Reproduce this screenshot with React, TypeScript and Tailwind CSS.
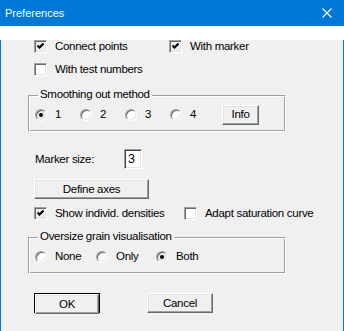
import React from "react";

const font = { fontFamily: '"Liberation Sans", Arial, sans-serif' };

function CheckBox({ checked }: { checked?: boolean }) {
    return (
        <span
            className={`flex h-[13px] w-[13px] shrink-0 items-center justify-center border border-t-[#a0a0a0] border-l-[#a0a0a0] border-r-white border-b-white shadow-[inset_1px_1px_0_#696969,inset_-1px_-1px_0_#e3e3e3] ${
                checked ? "bg-[#ececec]" : "bg-white"
            }`}
        >
            {checked && (
                <svg width="7" height="7" viewBox="0 0 7 7">
                    <polyline points="0.5,2.5 2.5,4.5 6.5,0.5" fill="none" stroke="#000" strokeWidth="2" />
                </svg>
            )}
        </span>
    );
}

function Radio({ checked }: { checked?: boolean }) {
    return (
        <span
            className={`flex h-[12px] w-[12px] shrink-0 items-center justify-center rounded-full border border-t-[#a0a0a0] border-l-[#a0a0a0] border-r-white border-b-white shadow-[inset_1px_1px_0_#696969,inset_-1px_-1px_0_#e3e3e3] ${
                checked ? "bg-[#ececec]" : "bg-white"
            }`}
        >
            {checked && <span className="h-[4px] w-[4px] rounded-full bg-black" />}
        </span>
    );
}

function CheckItem({ label, checked, className = "" }: { label: string; checked?: boolean; className?: string }) {
    return (
        <div className={`flex items-center gap-[8px] ${className}`}>
            <CheckBox checked={checked} />
            <span>{label}</span>
        </div>
    );
}

function RadioItem({ label, checked, className = "" }: { label: string; checked?: boolean; className?: string }) {
    return (
        <div className={`flex items-center gap-[8px] ${className}`}>
            <Radio checked={checked} />
            <span>{label}</span>
        </div>
    );
}

function Button({ label, def, className = "" }: { label: string; def?: boolean; className?: string }) {
    const raised =
        "flex h-[20px] items-center justify-center bg-[#f0f0f0] border border-t-white border-l-white border-r-[#696969] border-b-[#696969] shadow-[inset_-1px_-1px_0_#a0a0a0,inset_1px_1px_0_#e3e3e3]";
    if (def) {
        return (
            <div className={`h-[20px] border border-black ${className}`}>
                <div className={`${raised} h-[18px]`}>{label}</div>
            </div>
        );
    }
    return <div className={`${raised} ${className}`}>{label}</div>;
}

function GroupBox({ title, children }: { title: string; children: React.ReactNode }) {
    return (
        <div className="relative flex h-[37px] w-[258px] items-center border border-t-[#a0a0a0] border-l-[#a0a0a0] border-r-white border-b-white shadow-[inset_1px_1px_0_#fff,inset_-1px_-1px_0_#a0a0a0] pl-[6px] pt-[2px]">
            <span className="absolute -top-[8px] left-[9px] bg-[#f0f0f0] px-[2px]">{title}</span>
            {children}
        </div>
    );
}

export default function App() {
    return (
        <div className="h-[331px] w-[344px] text-[11.5px] leading-[13px] tracking-[-0.3px] text-black" style={font}>
            <div className="flex h-[26px] items-center justify-between bg-[#0078d7] pl-[5px] pr-[12px] text-[11px] tracking-normal text-white">
                <span>Preferences</span>
                <svg width="10" height="10" viewBox="0 0 10 10">
                    <path d="M0.5 0.5 L9.5 9.5 M9.5 0.5 L0.5 9.5" stroke="#fff" strokeWidth="1.1" />
                </svg>
            </div>
            <div className="h-[305px] border-x border-b border-[#0078d7] bg-[#f0f0f0] pl-[27px]">
                <div className="ml-[6px] mt-[14px] flex h-[13px] items-center">
                    <CheckItem label="Connect points" checked className="w-[135px]" />
                    <CheckItem label="With marker" checked />
                </div>
                <div className="ml-[6px] mt-[10px] flex h-[13px] items-center">
                    <CheckItem label="With test numbers" />
                </div>

                <div className="mt-[19px]">
                    <GroupBox title="Smoothing out method">
                        <RadioItem label="1" checked className="w-[45px]" />
                        <RadioItem label="2" className="w-[45px]" />
                        <RadioItem label="3" className="w-[45px]" />
                        <RadioItem label="4" className="w-[45px]" />
                        <Button label="Info" className="ml-[7px] w-[37px]" />
                    </GroupBox>
                </div>

                <div className="ml-[7px] mt-[17px] flex h-[20px] items-center">
                    <span className="w-[89px]">Marker size:</span>
                    <div className="flex h-[20px] w-[18px] items-center border border-t-[#a0a0a0] border-l-[#a0a0a0] border-r-white border-b-white bg-white pl-[3px] text-[12.5px] tracking-normal shadow-[inset_1px_1px_0_#404040,inset_-1px_-1px_0_#e3e3e3]">
                        3
                    </div>
                </div>

                <Button label="Define axes" className="ml-[6px] mt-[10px] w-[115px]" />

                <div className="ml-[6px] mt-[8px] flex h-[13px] items-center">
                    <CheckItem label="Show individ. densities" checked className="w-[150px]" />
                    <CheckItem label="Adapt saturation curve" />
                </div>

                <div className="mt-[17px]">
                    <GroupBox title="Oversize grain visualisation">
                        <RadioItem label="None" className="w-[61px]" />
                        <RadioItem label="Only" className="w-[60px]" />
                        <RadioItem label="Both" checked />
                    </GroupBox>
                </div>

                <div className="ml-[6px] mt-[19px] flex">
                    <Button label="OK" def className="w-[66px]" />
                    <Button label="Cancel" className="ml-[47px] w-[66px]" />
                </div>
            </div>
        </div>
    );
}
